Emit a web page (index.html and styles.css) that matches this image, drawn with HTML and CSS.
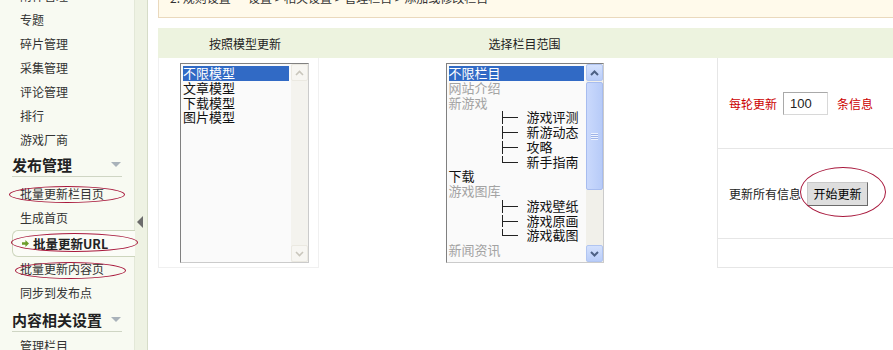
FILE: index.html
```html
<!DOCTYPE html>
<html lang="zh-CN">
<head>
    <meta charset="UTF-8">
    <meta name="viewport" content="width=device-width, initial-scale=1.0">
    <title>批量更新URL</title>

    <link rel="stylesheet" href="styles.css">
</head>
<body>

<div class="page">

    <!-- Left menu -->
    <aside class="sidebar">
        <ul class="menu menu-first">
            <li>附件管理</li>
            <li>专题</li>
            <li>碎片管理</li>
            <li>采集管理</li>
            <li>评论管理</li>
            <li>排行</li>
            <li>游戏厂商</li>
        </ul>

        <h3 class="menu-title">发布管理<i class="caret"></i></h3>
        <ul class="menu">
            <li>批量更新栏目页<span class="ring ring-a"></span></li>
            <li>生成首页</li>
            <li class="current">
                <svg class="go" width="7" height="7" viewBox="0 0 7 7"><path d="M0 2.2h3.4V0L7 3.5 3.4 7V4.8H0z" fill="#6c9d2b"/></svg>
                批量更新URL<span class="ring ring-b"></span>
            </li>
            <li>批量更新内容页<span class="ring ring-c"></span></li>
            <li>同步到发布点</li>
        </ul>

        <h3 class="menu-title menu-title-next">内容相关设置<i class="caret"></i></h3>
        <ul class="menu">
            <li>管理栏目</li>
        </ul>
    </aside>

    <div class="splitter"><i class="split-arrow"></i></div>

    <!-- Main area -->
    <main class="content">
        <div class="crumbs">2. 规则设置 • 设置 &gt; 相关设置 &gt; 管理栏目 &gt; 添加或修改栏目</div>

        <div class="update-form">
            <div class="form-head">按照模型更新</div>
            <div class="form-head">选择栏目范围</div>
            <div class="form-head"></div>

            <div class="cell cell-models">
                <div class="listbox listbox-models">
                    <div class="options">
                        <div class="selected">不限模型</div>
                        <div>文章模型</div>
                        <div>下载模型</div>
                        <div>图片模型</div>
                    </div>
                    <div class="scrollbar">
                        <span class="sb-btn"><svg width="9" height="6" viewBox="0 0 9 6"><path d="M1 5l3.5-3.5L8 5" fill="none" stroke="#c9c6bc" stroke-width="1.6"/></svg></span>
                        <span class="sb-track"></span>
                        <span class="sb-btn"><svg width="9" height="6" viewBox="0 0 9 6"><path d="M1 1l3.5 3.5L8 1" fill="none" stroke="#c9c6bc" stroke-width="1.6"/></svg></span>
                    </div>
                </div>
            </div>

            <div class="cell cell-cats">
                <div class="listbox listbox-cats">
                    <div class="options">
                        <div class="selected">不限栏目</div>
                        <div class="dim">网站介绍</div>
                        <div class="dim">新游戏</div>
                        <div><i class="tree"></i>游戏评测</div>
                        <div><i class="tree"></i>新游动态</div>
                        <div><i class="tree"></i>攻略</div>
                        <div><i class="tree tree-last"></i>新手指南</div>
                        <div>下载</div>
                        <div class="dim">游戏图库</div>
                        <div><i class="tree"></i>游戏壁纸</div>
                        <div><i class="tree"></i>游戏原画</div>
                        <div><i class="tree tree-last"></i>游戏截图</div>
                        <div class="dim">新闻资讯</div>
                    </div>
                    <div class="scrollbar scrollbar-xp">
                        <span class="sb-btn"><svg width="9" height="6" viewBox="0 0 9 6"><path d="M1 5l3.5-3.5L8 5" fill="none" stroke="#4d6185" stroke-width="2"/></svg></span>
                        <span class="sb-thumb"><i class="grip"></i></span>
                        <span class="sb-track"></span>
                        <span class="sb-btn"><svg width="9" height="6" viewBox="0 0 9 6"><path d="M1 1l3.5 3.5L8 1" fill="none" stroke="#4d6185" stroke-width="2"/></svg></span>
                    </div>
                </div>
            </div>

            <div class="cell opt">
                <span class="red">每轮更新</span>
                <input class="num-input" type="text" value="100">
                <span class="red">条信息</span>
            </div>
            <div class="cell opt">
                更新所有信息
                <span class="ring-wrap">
                    <button type="button" class="start-btn">开始更新</button>
                    <span class="ring ring-btn"></span>
                </span>
            </div>
            <div class="cell opt"></div>
        </div>
    </main>

</div>

</body>
</html>
```

FILE: styles.css
```css
* {
    box-sizing: border-box;
}

body {
    margin: 0;
    font-family: "Noto Sans CJK SC", sans-serif;
    font-size: 12px;
    color: #333;
    background-color: #fff;
}

.page {
    display: flex;
    width: 893px;
    height: 350px;
    overflow: hidden;
}

/* Left menu */
.sidebar {
    flex: 0 0 134px;
    background-color: #f8faf2;
}

.menu {
    list-style: none;
    margin: 0;
    padding: 0;
}

.menu-first {
    margin-top: -16px;
}

.menu li {
    position: relative;
    height: 24px;
    line-height: 24px;
    padding-left: 20px;
    white-space: nowrap;
}

.menu li.current {
    display: flex;
    align-items: center;
    gap: 4px;
    height: 27px;
    margin-left: 12px;
    margin-right: -1px;
    padding-left: 9px;
    line-height: 25px;
    border: 1px solid #cdd5bd;
    border-right: none;
    border-radius: 6px 0 0 6px;
    background-color: #fbfcf7;
    font-size: 12.5px;
    font-weight: bold;
    color: #222;
}

.menu-title {
    display: flex;
    justify-content: space-between;
    align-items: center;
    height: 25px;
    margin: 0 12px 5px;
    border-bottom: 1px solid #cfd5c4;
    font-size: 15px;
    font-weight: bold;
    color: #222;
}

.menu-title-next {
    margin-top: 2px;
    margin-bottom: 2px;
}

.caret {
    width: 0;
    height: 0;
    margin-right: 1px;
    border-left: 5px solid transparent;
    border-right: 5px solid transparent;
    border-top: 5px solid #a9b2ba;
}

/* hand drawn marks */
.ring {
    position: absolute;
    border: 1px solid #a8183c;
    border-radius: 50%;
    pointer-events: none;
}

.ring-a { left: 9px; top: 4px; width: 116px; height: 17px; }
.ring-b { left: -2px; top: 2px; width: 127px; height: 19px; }
.ring-c { left: 15px; top: 5px; width: 111px; height: 17px; }
.ring-btn { left: -1px; top: -15px; width: 86px; height: 50px; }

/* splitter */
.splitter {
    flex: 0 0 14px;
    padding-top: 216px;
    background-color: #eef2e3;
    border-left: 1px solid #e3e8d8;
    border-right: 1px solid #d6dcc8;
}

.split-arrow {
    display: block;
    width: 0;
    height: 0;
    margin-left: 2px;
    border-top: 6px solid transparent;
    border-bottom: 6px solid transparent;
    border-right: 6px solid #6b6b6b;
}

/* main */
.content {
    flex: 0 0 auto;
    width: 810px;
    padding-left: 10px;
}

.crumbs {
    margin-top: -14px;
    padding: 2px 11px 10px;
    line-height: 18px;
    background-color: #fffaeb;
    border: 1px solid #ead9bd;
    color: #333;
    white-space: nowrap;
}

.update-form {
    display: grid;
    grid-template-columns: 161px 398px 240px;
    grid-template-rows: 30px 91px 90px 29px;
    margin-top: 10px;
}

.form-head {
    display: flex;
    align-items: center;
    justify-content: center;
    padding-left: 13px;
    background-color: #edf3df;
    color: #222;
}

.cell-models,
.cell-cats {
    grid-row: 2 / 5;
    display: flex;
    justify-content: center;
    align-items: flex-start;
    padding: 5px 0 0 13px;
}

.cell-models {
    border-left: 1px solid #f0f0f0;
    border-right: 1px solid #f0f0f0;
    border-bottom: 1px solid #f0f0f0;
    padding-left: 12px;
}

/* list boxes */
.listbox {
    display: flex;
    height: 200px;
    border: 1px solid;
    border-color: #808080 #cbcbcb #cbcbcb #808080;
    background-color: #fafafa;
}

.listbox-models { width: 129px; }
.listbox-cats { width: 158px; }

.options {
    flex: 1;
    padding: 2px;
    overflow: hidden;
    font-size: 13px;
    line-height: 14.75px;
    color: #111;
}

.options div {
    height: 14.75px;
    white-space: nowrap;
}

.options .selected {
    background-color: #316ac5;
    color: #fff;
}

.options .dim {
    color: #a3a3a3;
}

.tree {
    position: relative;
    display: inline-block;
    width: 16px;
    height: 14.75px;
    margin: 0 9px 0 53px;
    vertical-align: top;
}

.tree::before {
    content: "";
    position: absolute;
    left: 0;
    top: 1px;
    bottom: 1px;
    width: 1px;
    background-color: #222;
}

.tree-last::before {
    bottom: 7px;
}

.tree::after {
    content: "";
    position: absolute;
    left: 0;
    top: 7px;
    width: 16px;
    height: 1px;
    background-color: #222;
}

.scrollbar {
    display: flex;
    flex-direction: column;
    width: 17px;
    background-color: #f4f3ee;
}

.sb-btn {
    display: flex;
    align-items: center;
    justify-content: center;
    height: 17px;
    border: 1px solid #ebe9e1;
    border-radius: 2px;
    background-color: #f7f6f2;
}

.sb-track {
    flex: 1;
}

.scrollbar-xp {
    background-color: #f1f0ea;
}

.scrollbar-xp .sb-btn {
    background: linear-gradient(#d4e1fd, #b9cdf9);
    border-color: #b1c5f1;
}

.sb-thumb {
    display: flex;
    align-items: center;
    justify-content: center;
    height: 108px;
    margin-top: 1px;
    background: linear-gradient(90deg, #cad9fc, #b7cbf8);
    border: 1px solid #a7bcef;
    border-radius: 2px;
}

.grip {
    width: 7px;
    height: 7px;
    background: repeating-linear-gradient(#eef3fe 0 1px, #9eb3e8 1px 2px);
}

/* options column */
.opt {
    display: flex;
    align-items: center;
    padding-left: 11px;
    border-left: 1px solid #e6e6e6;
    border-bottom: 1px solid #e6e6e6;
    white-space: nowrap;
    color: #222;
}

.red {
    color: #c00;
}

.num-input {
    width: 45px;
    height: 23px;
    margin: 0 9px 0 6px;
    padding: 0 6px;
    border: 1px solid;
    border-color: #a9a9a9 #d8d8d8 #d8d8d8 #a9a9a9;
    font: 13px "Liberation Sans", Arial, sans-serif;
    color: #222;
}

.ring-wrap {
    position: relative;
    display: inline-flex;
}

.start-btn {
    width: 61px;
    height: 24px;
    margin-left: 6px;
    padding: 0;
    border: 1px solid;
    border-color: #c9c9c9 #6a6a6a #6a6a6a #c9c9c9;
    background-color: #dedede;
    font: 12px "Noto Sans CJK SC", sans-serif;
    color: #000;
    cursor: pointer;
}
```
